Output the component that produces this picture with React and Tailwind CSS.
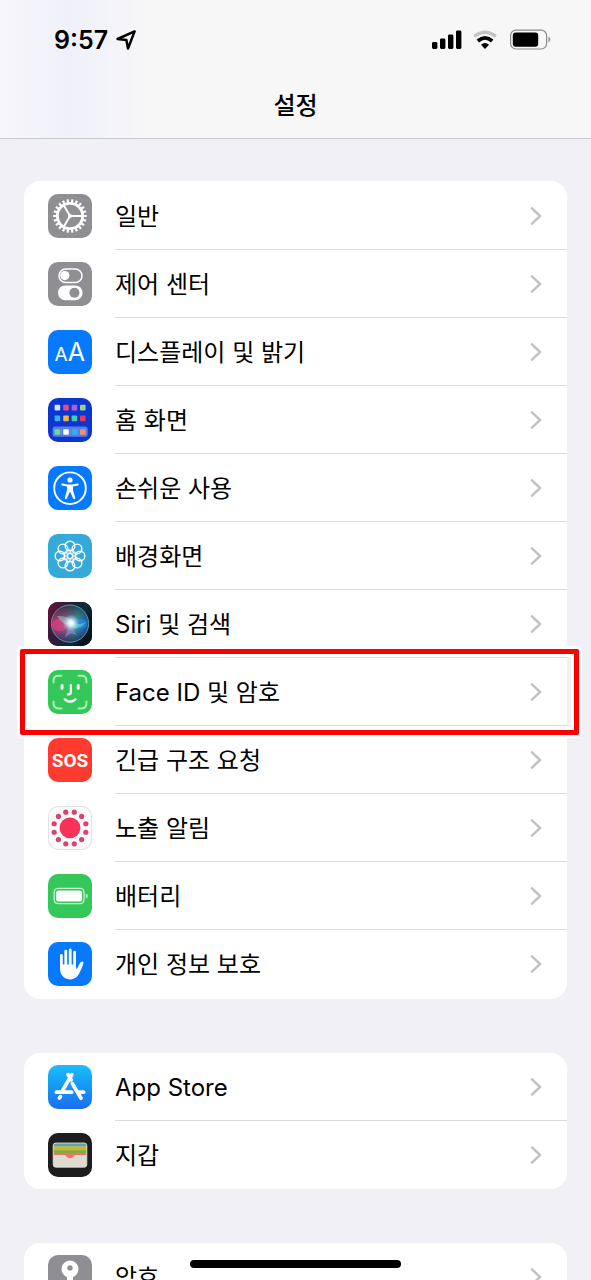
import React from 'react';

const range = (n) => Array.from({ length: n }, (_, i) => i);

function polar(radius, degrees) {
  const a = (degrees * Math.PI) / 180;
  return [22 + radius * Math.cos(a), 22 + radius * Math.sin(a)];
}

function Glyph({ children }) {
  return (
    <svg viewBox="0 0 44 44" className="size-full" fill="none" aria-hidden="true">
      {children}
    </svg>
  );
}

function GearIcon() {
  return (
    <Glyph>
      <circle cx="22" cy="22" r="12.6" stroke="#fff" strokeWidth="2.8" />
      {range(22).map((i) => {
        const [x1, y1] = polar(13, (i * 360) / 22);
        const [x2, y2] = polar(16.8, (i * 360) / 22);
        return <line key={i} x1={x1} y1={y1} x2={x2} y2={y2} stroke="#fff" strokeWidth="2.2" />;
      })}
      {[0, 120, 240].map((d) => {
        const [x, y] = polar(12.5, d);
        return <line key={d} x1="22" y1="22" x2={x} y2={y} stroke="#fff" strokeWidth="2" />;
      })}
      <circle cx="22" cy="22" r="2" fill="#fff" />
    </Glyph>
  );
}

function ControlIcon() {
  return (
    <Glyph>
      <rect x="11" y="7" width="23" height="13.4" rx="6.7" stroke="#fff" strokeWidth="1.5" />
      <circle cx="16.8" cy="13.6" r="4.6" fill="#fff" />
      <rect x="10" y="23.4" width="24.6" height="14.8" rx="7.4" fill="#fff" />
      <circle cx="26.4" cy="30.8" r="5" fill="#8e8e93" />
    </Glyph>
  );
}

function DisplayIcon() {
  return (
    <Glyph>
      <text x="6.6" y="31" fill="#fff" fontFamily="Inter, sans-serif" fontSize="19">A</text>
      <text x="19.8" y="31" fill="#fff" fontFamily="Inter, sans-serif" fontSize="25">A</text>
    </Glyph>
  );
}

function HomeIcon() {
  const xs = [6.6, 15.2, 23.6, 32];
  const rows = [
    [6.8, ['#d5e3fb', '#ef4a80', '#a560f2', '#9fd08c']],
    [17.6, ['#2fb2f6', '#f0b444', '#45cdb4', '#e23a58']],
    [31.2, ['#6bdc90', '#ffffff', '#35aef5', '#f0936c']],
  ];
  return (
    <Glyph>
      <rect x="4.6" y="28.6" width="35" height="10.2" rx="2.6" fill="#5b7fe8" />
      {rows.map(([y, colors]) =>
        colors.map((c, i) => <rect key={c} x={xs[i]} y={y} width="5.6" height="5.6" rx="1" fill={c} />)
      )}
    </Glyph>
  );
}

function AccessibilityIcon() {
  return (
    <Glyph>
      <circle cx="22" cy="22.2" r="15.8" stroke="#fff" strokeWidth="1.9" />
      <circle cx="22" cy="14" r="2.6" fill="#fff" />
      <path
        d="M14.2 17.6 L20 18.6 H24 L29.8 17.6 Q30.8 17.7 30.7 18.6 Q30.6 19.2 30 19.4 L25 20.5 V24 L27.2 32 Q27.3 33 26.4 33.2 Q25.6 33.3 25.2 32.4 L22.4 26.2 H21.6 L18.8 32.4 Q18.4 33.3 17.6 33.2 Q16.7 33 16.8 32 L19 24 V20.5 L14 19.4 Q13.4 19.2 13.3 18.6 Q13.2 17.7 14.2 17.6 Z"
        fill="#fff"
      />
    </Glyph>
  );
}

function WallpaperIcon() {
  return (
    <Glyph>
      {range(8).map((i) => {
        const [cx, cy] = polar(10, i * 45);
        return <circle key={i} cx={cx} cy={cy} r="4.8" stroke="#fff" strokeWidth="1.4" />;
      })}
      {range(8).map((i) => {
        const [cx, cy] = polar(5.2, i * 45 + 22.5);
        return <circle key={i} cx={cx} cy={cy} r="2" stroke="#fff" strokeWidth=".7" />;
      })}
      <circle cx="22" cy="22" r="2.6" stroke="#fff" strokeWidth="1.2" />
    </Glyph>
  );
}

function SiriIcon() {
  return (
    <Glyph>
      <defs>
        <linearGradient id="siri-back" x1="0" y1="0" x2="1" y2="0.4">
          <stop offset="0" stopColor="#6b1236" />
          <stop offset=".45" stopColor="#2b1c3c" />
          <stop offset=".8" stopColor="#0b2a3a" />
          <stop offset="1" stopColor="#08151f" />
        </linearGradient>
        <linearGradient id="siri-orb" x1="0" y1="0.4" x2="1" y2="0.6">
          <stop offset="0" stopColor="#c02868" />
          <stop offset=".4" stopColor="#8f5f8c" />
          <stop offset=".65" stopColor="#3f9fa8" />
          <stop offset="1" stopColor="#1a4fa8" />
        </linearGradient>
        <radialGradient id="siri-glow">
          <stop offset="0" stopColor="#fff" />
          <stop offset=".3" stopColor="#e9fbff" stopOpacity=".9" />
          <stop offset="1" stopColor="#9adfe8" stopOpacity="0" />
        </radialGradient>
        <linearGradient id="siri-shade" x1="0" y1="0" x2="0" y2="1">
          <stop offset="0" stopColor="#0b2f34" stopOpacity=".75" />
          <stop offset=".45" stopColor="#0b2f34" stopOpacity="0" />
          <stop offset=".6" stopColor="#20204a" stopOpacity="0" />
          <stop offset="1" stopColor="#20204a" stopOpacity=".8" />
        </linearGradient>
      </defs>
      <rect width="44" height="44" fill="url(#siri-back)" />
      <circle cx="22" cy="21.6" r="18.6" fill="url(#siri-orb)" />
      <circle cx="22" cy="21.6" r="18.6" fill="url(#siri-shade)" stroke="#4f9a9c" strokeWidth="1" />
      <ellipse cx="12" cy="23" rx="8" ry="6.4" fill="#e0457f" opacity=".5" />
      <ellipse cx="32" cy="22" rx="7" ry="5" fill="#1f8ee6" opacity=".6" />
      <path d="M9 14 Q21 13 25 20 Q31 24 38 20 Q30 30 22 24 Q15 23 9 14Z" fill="#8fe6dc" opacity=".45" />
      <path d="M17 36 Q19 27 23 20 Q25 27 29 34 Q24 28 17 36Z" fill="#b18ae0" opacity=".55" />
      <circle cx="23" cy="21" r="8.5" fill="url(#siri-glow)" />
    </Glyph>
  );
}

function FaceIcon() {
  return (
    <Glyph>
      <g stroke="#a9f5b4" strokeWidth="2" strokeLinecap="round">
        <path d="M5.6 12.6 V10.6 Q5.6 5.8 10.4 5.8 H13.4" />
        <path d="M30.6 5.8 H33.6 Q38.4 5.8 38.4 10.6 V12.6" />
        <path d="M5.6 31.6 V33.6 Q5.6 38.4 10.4 38.4 H13.4" />
        <path d="M30.6 38.4 H33.6 Q38.4 38.4 38.4 33.6 V31.6" />
      </g>
      <g stroke="#fff" strokeLinecap="round">
        <path d="M14 15.4 V18.2 M30.2 15.4 V18.2" strokeWidth="3" />
        <path d="M22.8 15 V22.2 Q22.8 24.4 20.6 24.4 H20" strokeWidth="2.2" />
        <path d="M16.8 29.4 Q22 34 27.4 29.4" strokeWidth="2.4" />
      </g>
    </Glyph>
  );
}

function SosIcon() {
  return (
    <Glyph>
      <text
        x="22"
        y="29"
        textAnchor="middle"
        fill="#fff"
        fontFamily="Roboto, sans-serif"
        fontWeight="700"
        fontSize="19"
      >
        SOS
      </text>
    </Glyph>
  );
}

function ExposureIcon() {
  return (
    <Glyph>
      <circle cx="22" cy="21.8" r="10.4" fill="#fa3259" />
      {range(12).map((i) => {
        const [cx, cy] = polar(16.4, i * 30 + 15);
        return <circle key={i} cx={cx} cy={cy} r="2.6" fill="#d6456e" />;
      })}
    </Glyph>
  );
}

function BatteryIcon() {
  return (
    <Glyph>
      <rect x="6.2" y="14.4" width="29.8" height="15.2" rx="3.8" stroke="#c9f8d0" strokeWidth="1.3" />
      <rect x="8.2" y="16.4" width="25.8" height="11.2" rx="2.2" fill="#fff" />
      <path d="M37.8 19.6 Q39.8 20.4 39.8 22 Q39.8 23.6 37.8 24.4Z" fill="#c9f8d0" />
    </Glyph>
  );
}

function HandIcon() {
  return (
    <Glyph>
      <g stroke="#fff" strokeWidth="2.8" strokeLinecap="round">
        <path d="M13.4 13.4 V27 M17.8 9.2 V25 M22.2 8 V25 M26.6 10.2 V26" />
      </g>
      <path
        d="M12 20 L15 22.5 H28 V27 Q29.4 26.4 30.8 23.2 Q32 19.8 34.2 19.6 Q36 19.6 35.4 21.6 Q33.4 28 30.6 32.6 Q27.6 37.4 22.2 37.4 Q16.4 37.4 13.6 32.8 Q12 30 12 26 Z"
        fill="#fff"
      />
    </Glyph>
  );
}

function AppStoreIcon() {
  return (
    <Glyph>
      <g stroke="#fff" strokeWidth="3.7" strokeLinecap="round">
        <path d="M23.8 9.6 L14.2 26.2" />
        <path d="M11.4 33 L12.4 31.6" />
        <path d="M20 9.6 L23.2 14.8" />
        <path d="M24.4 18.6 L33 33.2" />
        <path d="M8.4 27.2 H23.6" />
        <path d="M30.6 27.2 H35.6" />
      </g>
    </Glyph>
  );
}

function WalletIcon() {
  return (
    <Glyph>
      <defs>
        <clipPath id="wallet-shape">
          <rect x="5.2" y="10" width="33.6" height="24.2" rx="2.6" />
        </clipPath>
      </defs>
      <g clipPath="url(#wallet-shape)">
        <rect x="5" y="10" width="34" height="25" fill="#dedccf" />
        <rect x="5" y="10" width="34" height="3.6" fill="#5aa3ab" />
        <rect x="5" y="13.4" width="34" height="4" fill="#c3b92f" />
        <rect x="5" y="17.2" width="34" height="3.6" fill="#86a83c" />
        <path d="M5 20.2 H39 V22 H27.6 Q26.4 22 25.6 23.4 Q24.4 25.2 22 25.2 Q19.6 25.2 18.4 23.4 Q17.6 22 16.4 22 H5Z" fill="#ee7368" />
      </g>
      <rect x="5.2" y="10" width="33.6" height="24.2" rx="2.6" stroke="#e8e8df" strokeWidth=".8" />
    </Glyph>
  );
}

function KeyIcon() {
  return (
    <Glyph>
      <path
        fillRule="evenodd"
        d="M22 5.4 A8.6 8.6 0 0 1 25 22 V36 L22 39 L19 36 V22 A8.6 8.6 0 0 1 22 5.4Z M22 10.2 A2.7 2.7 0 1 0 22 15.6 A2.7 2.7 0 1 0 22 10.2Z"
        fill="#fff"
      />
    </Glyph>
  );
}

const groups = [
  [
    { label: '일반', icon: GearIcon, tile: 'bg-[#8e8e93]' },
    { label: '제어 센터', icon: ControlIcon, tile: 'bg-[#8e8e93]' },
    { label: '디스플레이 및 밝기', icon: DisplayIcon, tile: 'bg-[#067aff]' },
    { label: '홈 화면', icon: HomeIcon, tile: 'bg-[#0c37cf]' },
    { label: '손쉬운 사용', icon: AccessibilityIcon, tile: 'bg-[#067aff]' },
    { label: '배경화면', icon: WallpaperIcon, tile: 'bg-[#35a9da]' },
    { label: 'Siri 및 검색', icon: SiriIcon, tile: 'bg-black' },
    { label: 'Face ID 및 암호', icon: FaceIcon, tile: 'bg-[#34c759]', highlighted: true },
    { label: '긴급 구조 요청', icon: SosIcon, tile: 'bg-[#ff3b30]' },
    { label: '노출 알림', icon: ExposureIcon, tile: 'bg-[#fdfafb] ring-1 ring-inset ring-[#e3e1e4]' },
    { label: '배터리', icon: BatteryIcon, tile: 'bg-[#34c759]' },
    { label: '개인 정보 보호', icon: HandIcon, tile: 'bg-[#067aff]' },
  ],
  [
    { label: 'App Store', icon: AppStoreIcon, tile: 'bg-linear-to-b from-[#1fbdf8] to-[#1d6df0]' },
    { label: '지갑', icon: WalletIcon, tile: 'bg-[#1d1d1d]' },
  ],
  [{ label: '암호', icon: KeyIcon, tile: 'bg-[#8e8e93]' }],
];

function Row({ label, icon: Icon, tile, highlighted }) {
  return (
    <li className="group relative">
      <a href="#" className="flex h-[68px] items-center pl-6">
        <span className={`size-11 shrink-0 overflow-hidden rounded-[10px] ${tile}`}>
          <Icon />
        </span>
        <span className="ml-[23px] flex h-full flex-1 items-center justify-between border-b border-[#dcdcde] pr-6 group-last:border-transparent">
          <span className="pt-0.5">{label}</span>
          <svg viewBox="0 0 14 20" className="h-5 w-3.5" fill="none" aria-hidden="true">
            <path d="M3 2.4 L11 10 L3 17.6" stroke="#c2c2c4" strokeWidth="2.5" strokeLinecap="round" strokeLinejoin="round" />
          </svg>
        </span>
      </a>
      {highlighted && (
        <span className="pointer-events-none absolute -top-[9px] -right-3 -bottom-[9px] -left-1 z-10 rounded-xs border-[5px] border-[#fb0000] shadow-[0_0_0_3px_#fff,inset_0_0_0_3px_#fff]" />
      )}
    </li>
  );
}

function StatusBar() {
  return (
    <div className="flex h-20 items-center justify-between pr-10 pl-[54px]">
      <div className="flex items-center gap-2">
        <time className="text-[25px] leading-8 font-semibold">9:57</time>
        <svg viewBox="0 0 20 20" className="size-5" fill="none" aria-hidden="true">
          <path d="M18.6 1.4 L1.6 9 L10.4 10 L12 18.6 Z" stroke="#000" strokeWidth="2.5" strokeLinejoin="round" />
        </svg>
      </div>
      <div className="flex items-center gap-[11px]">
        <svg viewBox="0 0 30 20" className="h-5 w-[30px]" aria-hidden="true">
          <rect x="0" y="12" width="5.4" height="7" rx="1.4" />
          <rect x="8" y="8.6" width="5.4" height="10.4" rx="1.4" />
          <rect x="16" y="4.6" width="5.4" height="14.4" rx="1.4" />
          <rect x="24" y=".6" width="5.4" height="18.4" rx="1.4" />
        </svg>
        <svg viewBox="0 0 24 20" className="h-5 w-6" fill="none" aria-hidden="true">
          <path d="M1.2 6.4 Q12 -2 22.8 6.4" stroke="#c4c4c4" strokeWidth="3.4" />
          <path d="M4.8 11 Q12 4.8 19.2 11" stroke="#000" strokeWidth="3.8" />
          <path d="M8 14.8 Q12 11.4 16 14.8 L12 19Z" fill="#000" />
        </svg>
        <svg viewBox="0 0 43 22" className="h-[22px] w-[43px]" fill="none" aria-hidden="true">
          <rect x="2.6" y="1.2" width="36" height="18.8" rx="5.4" stroke="#8c8c8c" strokeWidth="1.2" />
          <rect x="4.8" y="3.4" width="25.4" height="14.4" rx="3" fill="#000" />
          <path d="M40.4 7.6 Q42.4 8.6 42.4 10.6 Q42.4 12.6 40.4 13.6Z" fill="#999" />
        </svg>
      </div>
    </div>
  );
}

export default function App() {
  return (
    <div className="relative h-screen overflow-hidden bg-[#f1f0f6] font-['Inter','Noto_Sans_CJK_KR',sans-serif] text-2xl leading-8 text-black">
      <header className="border-b border-[#c9c9cd] bg-linear-to-r from-[#f6f6fb] via-[#f7f7f7] via-30% to-[#f7f7f7]">
        <div className="bg-linear-to-r from-transparent via-[#f0f0fb] via-12% to-transparent to-25%">
          <StatusBar />
          <h1 className="h-[58px] pt-2.5 text-center leading-8 font-medium">설정</h1>
        </div>
      </header>
      <main className="flex flex-col gap-[54px] px-6 pt-[42px]">
        {groups.map((items, i) => (
          <ul key={i} className={i === 0 ? 'rounded-2xl bg-white py-px' : 'rounded-2xl bg-white'}>
            {items.map((item) => (
              <Row key={item.label} {...item} />
            ))}
          </ul>
        ))}
      </main>
      <div className="absolute inset-x-0 bottom-3 z-20 mx-auto h-2 w-[211px] rounded-full bg-black" />
    </div>
  );
}
